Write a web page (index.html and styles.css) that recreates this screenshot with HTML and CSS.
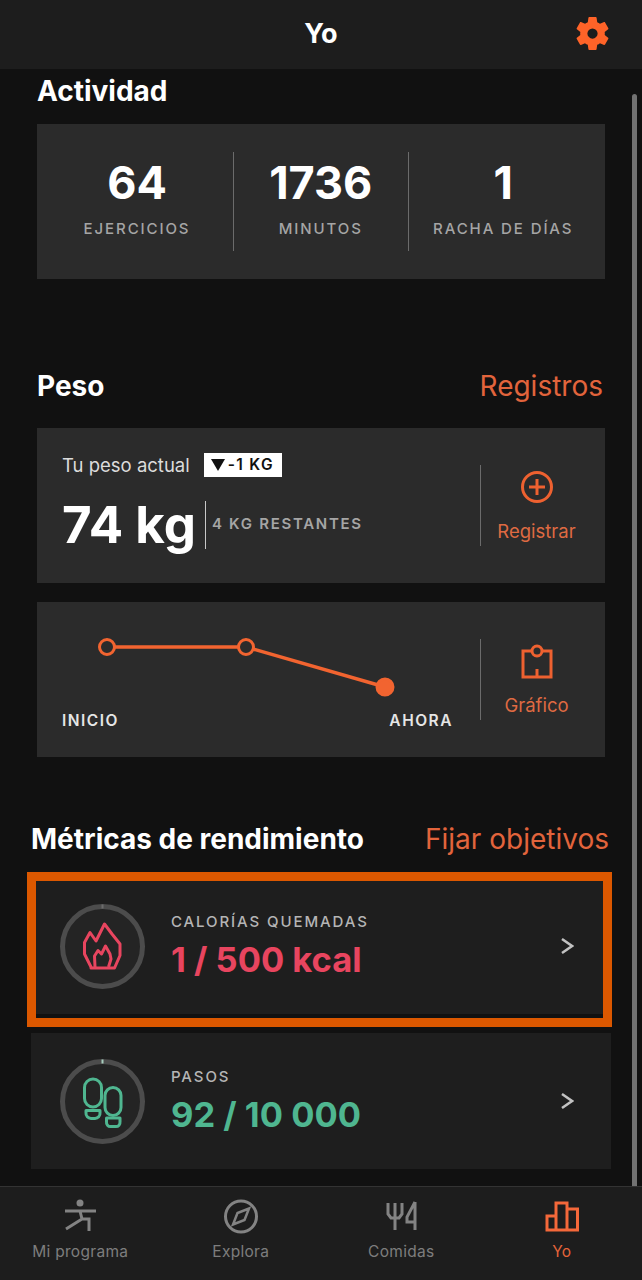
FILE: index.html
```html
<!DOCTYPE html>
<html lang="es">
<head>
    <meta charset="UTF-8" />
    <title>Yo</title>
    <link rel="stylesheet" href="styles.css">
</head>
<body>
    <div class="app">
        <header class="top-bar">
            <h1>Yo</h1>
            <svg class="gear" viewBox="0 0 24 24"><path fill-rule="evenodd" d="M19.14 12.94c.04-.3.06-.61.06-.94 0-.32-.02-.64-.07-.94l2.03-1.58c.18-.14.23-.41.12-.61l-1.92-3.32c-.12-.22-.37-.29-.59-.22l-2.39.96c-.5-.38-1.03-.7-1.62-.94l-.36-2.54c-.04-.24-.24-.41-.48-.41h-3.84c-.24 0-.43.17-.47.41l-.36 2.54c-.59.24-1.13.57-1.62.94l-2.39-.96c-.22-.08-.47 0-.59.22L2.74 8.87c-.12.21-.08.47.12.61l2.03 1.58c-.05.3-.09.63-.09.94s.02.64.07.94l-2.03 1.58c-.18.14-.23.41-.12.61l1.92 3.32c.12.22.37.29.59.22l2.39-.96c.5.38 1.03.7 1.62.94l.36 2.54c.05.24.24.41.48.41h3.84c.24 0 .44-.17.47-.41l.36-2.54c.59-.24 1.13-.56 1.62-.94l2.39.96c.22.08.47 0 .59-.22l1.92-3.32c.12-.22.07-.47-.12-.61l-2.01-1.58zM12 15a3 3 0 1 1 0-6 3 3 0 0 1 0 6z"/></svg>
        </header>

        <main class="content">
            <div class="scroll-thumb"></div>

            <section class="section section-activity">
                <div class="section-head"><h2>Actividad</h2></div>
                <div class="card stats-card">
                    <div class="stat">
                        <span class="stat-value">64</span>
                        <span class="stat-label">EJERCICIOS</span>
                    </div>
                    <div class="stat stat-middle">
                        <span class="stat-value">1736</span>
                        <span class="stat-label">MINUTOS</span>
                    </div>
                    <div class="stat">
                        <span class="stat-value">1</span>
                        <span class="stat-label">RACHA DE DÍAS</span>
                    </div>
                </div>
            </section>

            <section class="section section-weight">
                <div class="section-head">
                    <h2>Peso</h2>
                    <a class="head-link">Registros</a>
                </div>
                <div class="card weight-card">
                    <div class="weight-main">
                        <div class="weight-top">
                            <span class="weight-caption">Tu peso actual</span>
                            <span class="weight-badge"><i class="badge-arrow"></i>-1 KG</span>
                        </div>
                        <div class="weight-row">
                            <span class="weight-value">74 kg</span>
                            <span class="weight-left">4 KG RESTANTES</span>
                        </div>
                    </div>
                    <div class="card-action">
                        <svg class="action-icon" viewBox="0 0 36 36">
                            <circle cx="18" cy="18" r="14.5"/>
                            <path d="M10 18h16M18 10v16"/>
                        </svg>
                        <span>Registrar</span>
                    </div>
                </div>
                <div class="card weight-card">
                    <div class="weight-main chart">
                        <svg class="chart-line" viewBox="0 0 340 56">
                            <path d="M45 8H184L323 48"/>
                            <circle cx="45" cy="8" r="7.5"/>
                            <circle cx="184" cy="8" r="7.5"/>
                            <circle class="chart-now" cx="323" cy="48" r="8"/>
                        </svg>
                        <div class="chart-labels">
                            <span>INICIO</span>
                            <span>AHORA</span>
                        </div>
                    </div>
                    <div class="card-action">
                        <svg class="action-icon" viewBox="0 0 36 36">
                            <path d="M13 8H4V34H32V8H23"/>
                            <circle cx="18" cy="8" r="5"/>
                            <path d="M18 26v8"/>
                        </svg>
                        <span>Gráfico</span>
                    </div>
                </div>
            </section>

            <section class="section section-metrics">
                <div class="section-head">
                    <h2>Métricas de rendimiento</h2>
                    <a class="head-link">Fijar objetivos</a>
                </div>
                <div class="metric-card">
                    <div class="highlight"></div>
                    <svg class="metric-ring ring-red" viewBox="5 5 85 85">
                        <circle class="ring" cx="47.5" cy="47.5" r="40"/>
                        <path class="tick" d="M47.5 5.500v4"/>
                        <path class="glyph" d="M36 68L29.500 55V43.500L35 33.500L41 42L49.500 25L57 35L65 45V56.500L59.500 69H36Z"/>
                        <path class="glyph" d="M40 68L39.500 57L43 51.500L46.500 55L50.500 47L55 55L56 60L53.500 68"/>
                    </svg>
                    <div class="metric-text">
                        <span class="metric-label">CALORÍAS QUEMADAS</span>
                        <span class="metric-value value-red">1 / 500 kcal</span>
                    </div>
                    <svg class="chevron" viewBox="0 0 14 18"><path d="M2 2l10 7-10 7"/></svg>
                </div>
                <div class="metric-card">
                    <svg class="metric-ring ring-green" viewBox="5 5 85 85">
                        <circle class="ring" cx="47.5" cy="47.5" r="40"/>
                        <path class="tick" d="M47.5 5.500v4"/>
                        <rect class="glyph" x="29.500" y="25" width="17" height="28" rx="8.500"/>
                        <path class="glyph" d="M31 56.500H45V59A5 5 0 0 1 40 64.500H36A5 5 0 0 1 31 59Z"/>
                        <rect class="glyph" x="50" y="33.500" width="16" height="28" rx="8"/>
                        <path class="glyph" d="M51.500 64H65V68A4 4 0 0 1 61 72.500H55.500A4 4 0 0 1 51.500 68Z"/>
                    </svg>
                    <div class="metric-text">
                        <span class="metric-label">PASOS</span>
                        <span class="metric-value value-green">92 / 10 000</span>
                    </div>
                    <svg class="chevron" viewBox="0 0 14 18"><path d="M2 2l10 7-10 7"/></svg>
                </div>
            </section>
        </main>

        <nav class="tab-bar">
            <div class="tab">
                <svg class="tab-icon" viewBox="0 0 40 40">
                    <circle class="tab-dot" cx="20" cy="6" r="3.500"/>
                    <path d="M5 14H36M20 14L22 22H29V34M22 22L6 32"/>
                </svg>
                <span>Mi programa</span>
            </div>
            <div class="tab">
                <svg class="tab-icon" viewBox="0 0 40 40">
                    <circle cx="20" cy="19.500" r="15.500"/>
                    <path class="tab-thin" d="M28 11.500L23.500 23L12 27.500L16.500 16Z"/>
                </svg>
                <span>Explora</span>
            </div>
            <div class="tab">
                <svg class="tab-icon" viewBox="0 0 40 40">
                    <path d="M7 6V17L10 21H18L21 17V6M14 6V33M34 5V33M34 5L26 20V25H34"/>
                </svg>
                <span>Comidas</span>
            </div>
            <div class="tab tab-active">
                <svg class="tab-icon" viewBox="0 0 40 40">
                    <path d="M5 33V19H14V33ZM14 33V6H25V33ZM25 33V12H35.500V33Z"/>
                </svg>
                <span>Yo</span>
            </div>
        </nav>
    </div>
</body>
</html>
```

FILE: styles.css
```css
* {
    box-sizing: border-box;
}
html, body {
    height: 100%;
}
body {
    margin: 0;
    padding: 0;
    background: #111111;
    font-family: Inter, "Liberation Sans", sans-serif;
    color: #ffffff;
}
.app {
    display: flex;
    flex-direction: column;
    height: 1280px;
    overflow: hidden;
}

/* top bar */
.top-bar {
    position: relative;
    flex: 0 0 69px;
    display: flex;
    align-items: center;
    justify-content: center;
    padding-bottom: 2px;
    background: #1d1d1d;
}
.top-bar h1 {
    margin: 0;
    font-size: 27px;
    font-weight: 700;
}
.gear {
    position: absolute;
    top: 12.500px;
    right: 29px;
    width: 41px;
    height: 41px;
    fill: #ff6328;
}

/* sections */
.content {
    position: relative;
    flex: 1;
    min-height: 0;
}
.scroll-thumb {
    position: absolute;
    top: 25px;
    bottom: 0;
    right: 5px;
    width: 5px;
    border-radius: 3px 3px 0 0;
    background: #727272;
}
.section {
    padding: 0 37px;
}
.section-activity {
    padding-top: 6px;
}
.section-weight {
    margin-top: 91px;
}
.section-metrics {
    margin-top: 66px;
    padding: 0 31px;
}
.section-head {
    display: flex;
    align-items: center;
    justify-content: space-between;
    height: 34px;
    margin-bottom: 15px;
    padding: 0 2px 2px 0;
}
.section-weight .section-head {
    margin-bottom: 24px;
}
.section-metrics .section-head {
    margin-bottom: 21px;
}
.section-head h2 {
    margin: 0;
    font-size: 28px;
    font-weight: 700;
}
.head-link {
    font-size: 28px;
    color: #e2643c;
}
.card {
    height: 155px;
    background: #2b2b2b;
}

/* activity */
.stats-card {
    display: grid;
    grid-template-columns: 192px 175.500px 189.500px;
    align-items: center;
    padding-left: 4px;
}
.stat {
    display: flex;
    flex-direction: column;
    align-items: center;
    height: 99px;
}
.stat-middle {
    border-left: 1.500px solid #6b6b6b;
    border-right: 1.500px solid #6b6b6b;
}
.stat-value {
    font-size: 45px;
    line-height: 62px;
    font-weight: 700;
}
.stat-label {
    margin-top: 3px;
    font-size: 15px;
    font-weight: 500;
    letter-spacing: 1.900px;
    line-height: 24px;
    color: #a5a5a5;
}

/* weight */
.weight-card {
    display: flex;
    align-items: center;
    margin-bottom: 19px;
    padding: 0 13px 0 25px;
}
.weight-card:last-child {
    margin-bottom: 0;
}
.weight-main {
    flex: 1;
    min-width: 0;
    padding-bottom: 10px;
}
.weight-top {
    display: flex;
    align-items: center;
    gap: 14px;
}
.weight-caption {
    font-size: 18.500px;
    color: #dcdcdc;
}
.weight-badge {
    display: flex;
    align-items: center;
    gap: 3px;
    height: 24px;
    padding: 0 8px 0 7px;
    background: #ffffff;
    color: #111111;
    font-size: 15.500px;
    font-weight: 600;
    letter-spacing: 1.300px;
}
.badge-arrow {
    width: 0;
    height: 0;
    border-left: 7px solid transparent;
    border-right: 7px solid transparent;
    border-top: 12px solid #111111;
}
.weight-row {
    display: flex;
    align-items: center;
    margin-top: 24px;
}
.weight-value {
    font-size: 51px;
    line-height: 48px;
    font-weight: 700;
    padding-right: 9px;
    border-right: 1.500px solid #c8c8c8;
}
.weight-left {
    margin: 0 0 3px 6px;
    font-size: 15px;
    font-weight: 600;
    letter-spacing: 1.700px;
    color: #a5a5a5;
}
.card-action {
    flex: 0 0 112px;
    display: flex;
    flex-direction: column;
    align-items: center;
    justify-content: center;
    gap: 15px;
    height: 81px;
    border-left: 1.500px solid #6b6b6b;
    font-size: 18.500px;
    color: #df6a42;
}
.action-icon {
    width: 36px;
    height: 36px;
    fill: none;
    stroke: #ee6130;
    stroke-width: 3;
}

/* weight chart */
.chart {
    padding-bottom: 0;
}
.chart-line {
    display: block;
    width: 340px;
    height: 56px;
    margin-top: 10px;
    overflow: visible;
    fill: #2b2b2b;
    stroke: #f26430;
    stroke-width: 3;
}
.chart-line path {
    fill: none;
    stroke-width: 3.500;
}
.chart-now {
    fill: #f26430;
}
.chart-labels {
    display: flex;
    justify-content: space-between;
    width: 391px;
    margin-top: 16px;
    font-size: 15.500px;
    font-weight: 600;
    letter-spacing: 1.500px;
    color: #e6e6e6;
}

/* metrics */
.metric-card {
    position: relative;
    display: flex;
    align-items: center;
    height: 136px;
    margin-bottom: 19px;
    padding: 0 37px 0 29px;
    background: #1e1e1e;
}
.metric-card:last-child {
    margin-bottom: 0;
}
.highlight {
    position: absolute;
    top: -6px;
    left: -4px;
    right: -1px;
    bottom: -13px;
    border: 9px solid #dc5800;
}
.metric-ring {
    flex: 0 0 85px;
    width: 85px;
    height: 85px;
    fill: none;
}
.ring {
    fill: #242424;
    stroke: #4c4c4c;
    stroke-width: 5;
}
.glyph {
    stroke-width: 3;
    stroke-linejoin: round;
}
.tick {
    stroke-width: 2;
}
.ring-red .glyph {
    stroke: #e8455f;
}
.ring-red .tick {
    stroke: #6c6c6c;
}
.ring-green .glyph {
    stroke: #4fb690;
}
.ring-green .tick {
    stroke: #a6cdbd;
}
.metric-text {
    flex: 1;
    display: flex;
    flex-direction: column;
    margin-left: 26px;
    padding-top: 2px;
}
.metric-label {
    font-size: 15px;
    font-weight: 500;
    letter-spacing: 1.900px;
    line-height: 20px;
    color: #b5b5b5;
}
.metric-value {
    margin-top: 6px;
    font-size: 34.500px;
    line-height: 44px;
    font-weight: 700;
}
.value-red {
    color: #e8455f;
}
.value-green {
    color: #4fb690;
}
.chevron {
    width: 14px;
    height: 18px;
    fill: none;
    stroke: #c2c2c2;
    stroke-width: 2.500;
}

/* bottom tabs */
.tab-bar {
    flex: 0 0 94px;
    display: grid;
    grid-template-columns: repeat(4, 1fr);
    background: #1d1d1d;
    border-top: 1px solid #333333;
}
.tab {
    display: flex;
    flex-direction: column;
    align-items: center;
    padding-top: 10px;
    font-size: 15.500px;
    letter-spacing: 0.300px;
    color: #7d7d7d;
}
.tab span {
    margin-top: 5px;
}
.tab-icon {
    width: 40px;
    height: 40px;
    fill: none;
    stroke: #838383;
    stroke-width: 3;
}
.tab-thin {
    stroke-width: 2.500;
}
.tab-dot {
    fill: #838383;
    stroke: none;
}
.tab-active {
    color: #e5643a;
}
.tab-active .tab-icon {
    stroke: #f4683a;
}
```
